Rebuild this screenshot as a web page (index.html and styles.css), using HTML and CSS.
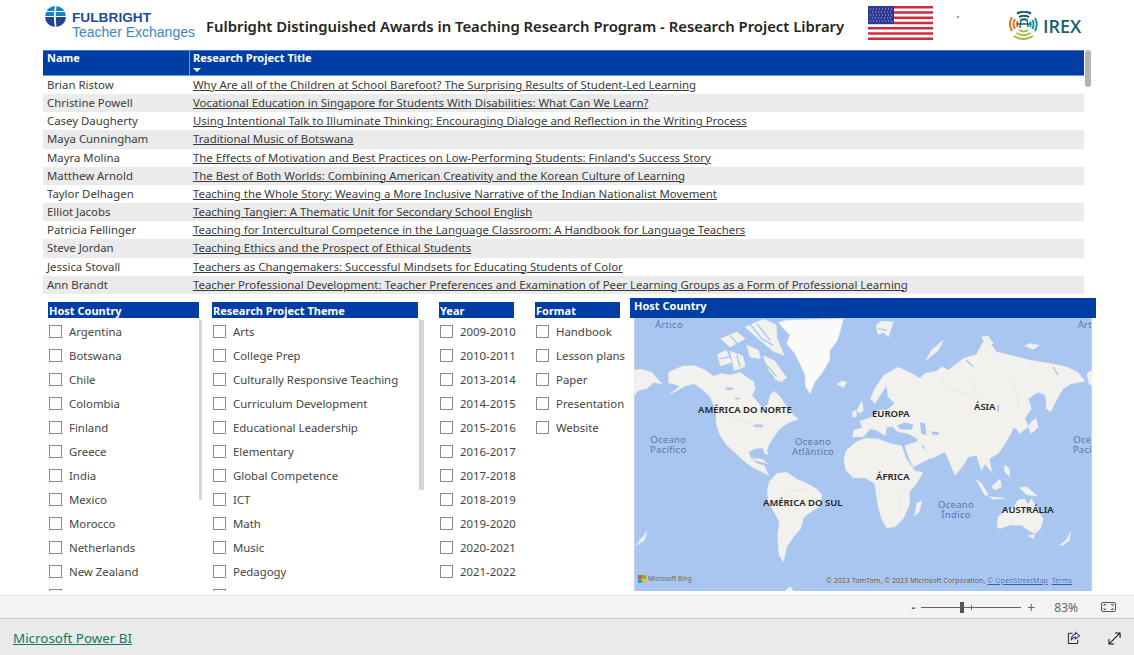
FILE: index.html
```html
<!DOCTYPE html>
<html lang="en">
<head>
  <meta charset="UTF-8">
  <meta name="viewport" content="width=device-width, initial-scale=1.0">
  <title>Research Project Library</title>
  <link rel="stylesheet" href="styles.css">
</head>
<body>

<div class="report">
  <div class="top-bar">
    <div class="fulbright">
      <svg class="globe" width="21" height="21" viewBox="0 0 21 21">
        <defs><clipPath id="globe-clip"><circle cx="10.5" cy="10.5" r="10.5"/></clipPath></defs>
        <g clip-path="url(#globe-clip)">
          <rect width="21" height="5" fill="#1482c5"/>
          <rect y="6" width="21" height="4" fill="#1482c5"/>
          <rect y="11" width="21" height="10" fill="#1f4396"/>
          <path d="M10 0C8.5 7 8.5 14 10 21H11.5C10.5 14 10.5 7 11.5 0Z" fill="#fff"/>
        </g>
      </svg>
      <div class="fulbright-text">
        <div class="fulbright-name">FULBRIGHT</div>
        <div class="fulbright-sub">Teacher Exchanges</div>
      </div>
    </div>
    <div class="report-title">Fulbright Distinguished Awards in Teaching Research Program - Research Project Library</div>
    <svg class="flag" width="65" height="34" viewBox="0 0 65 34">
      <rect width="65" height="34" fill="#fff"/>
      <path d="M0 1.3H65M0 6.5H65M0 11.8H65M0 17H65M0 22.2H65M0 27.5H65M0 32.7H65" stroke="#d2283c" stroke-width="2.6"/>
      <rect width="26" height="18" fill="#2e3a94"/>
      <path d="M2 3H24M4 6H24M2 9H24M4 12H24M2 15H24" stroke="#aab0dc" stroke-width="1" stroke-dasharray="1 2"/>
    </svg>
    <div class="speck"></div>
    <div class="irex">
      <svg width="29" height="29" viewBox="0 0 29 29" fill="none" stroke-width="2">
        <path d="M8 2.5Q15 -1 22 2.5M10 6Q15 3.5 20 6M12 9Q15 7.5 18 9" stroke="#17606a"/>
        <path d="M3 6Q-1 13 3 20M6 8Q3 13 6 18M9 10Q7 13 9 16" stroke="#e2722a"/>
        <path d="M26 7Q29.5 13 26 20M23.5 9Q25.5 13 23.5 18M21 10.5Q22.5 13 21 16" stroke="#1d97a0"/>
        <path d="M5 25Q15 31 24 25M7.5 22Q15 26.5 21.5 22M10 19Q15 22 19 19" stroke="#9cbf3c"/>
        <path d="M12 8L11 17M18 8L19 16M8 13H21" stroke="#17606a" stroke-width="1.3"/>
      </svg>
      <span class="irex-name">IREX</span>
    </div>
  </div>

  <div class="table-wrap">
    <div class="table">
      <div class="table-head">
        <div class="head-cell head-name">Name</div>
        <div class="head-cell">Research Project Title<span class="sort-arrow"></span></div>
      </div>
      <div class="row"><span class="name-col">Brian Ristow</span><a class="title-link">Why Are all of the Children at School Barefoot? The Surprising Results of Student-Led Learning</a></div>
      <div class="row"><span class="name-col">Christine Powell</span><a class="title-link">Vocational Education in Singapore for Students With Disabilities: What Can We Learn?</a></div>
      <div class="row"><span class="name-col">Casey Daugherty</span><a class="title-link">Using Intentional Talk to Illuminate Thinking: Encouraging Dialoge and Reflection in the Writing Process</a></div>
      <div class="row"><span class="name-col">Maya Cunningham</span><a class="title-link">Traditional Music of Botswana</a></div>
      <div class="row"><span class="name-col">Mayra Molina</span><a class="title-link">The Effects of Motivation and Best Practices on Low-Performing Students: Finland's Success Story</a></div>
      <div class="row"><span class="name-col">Matthew Arnold</span><a class="title-link">The Best of Both Worlds: Combining American Creativity and the Korean Culture of Learning</a></div>
      <div class="row"><span class="name-col">Taylor Delhagen</span><a class="title-link">Teaching the Whole Story: Weaving a More Inclusive Narrative of the Indian Nationalist Movement</a></div>
      <div class="row"><span class="name-col">Elliot Jacobs</span><a class="title-link">Teaching Tangier: A Thematic Unit for Secondary School English</a></div>
      <div class="row"><span class="name-col">Patricia Fellinger</span><a class="title-link">Teaching for Intercultural Competence in the Language Classroom: A Handbook for Language Teachers</a></div>
      <div class="row"><span class="name-col">Steve Jordan</span><a class="title-link">Teaching Ethics and the Prospect of Ethical Students</a></div>
      <div class="row"><span class="name-col">Jessica Stovall</span><a class="title-link">Teachers as Changemakers: Successful Mindsets for Educating Students of Color</a></div>
      <div class="row"><span class="name-col">Ann Brandt</span><a class="title-link">Teacher Professional Development: Teacher Preferences and Examination of Peer Learning Groups as a Form of Professional Learning</a></div>
    </div>
    <div class="table-scroll"></div>
  </div>

  <div class="lower">
    <div class="slicer slicer-country">
      <div class="slicer-head">Host Country</div>
      <div class="slicer-thumb"></div>
      <label class="item"><span class="box"></span>Argentina</label>
      <label class="item"><span class="box"></span>Botswana</label>
      <label class="item"><span class="box"></span>Chile</label>
      <label class="item"><span class="box"></span>Colombia</label>
      <label class="item"><span class="box"></span>Finland</label>
      <label class="item"><span class="box"></span>Greece</label>
      <label class="item"><span class="box"></span>India</label>
      <label class="item"><span class="box"></span>Mexico</label>
      <label class="item"><span class="box"></span>Morocco</label>
      <label class="item"><span class="box"></span>Netherlands</label>
      <label class="item"><span class="box"></span>New Zealand</label>
      <label class="item"><span class="box"></span></label>
    </div>
    <div class="slicer slicer-theme">
      <div class="slicer-head">Research Project Theme</div>
      <div class="slicer-thumb"></div>
      <label class="item"><span class="box"></span>Arts</label>
      <label class="item"><span class="box"></span>College Prep</label>
      <label class="item"><span class="box"></span>Culturally Responsive Teaching</label>
      <label class="item"><span class="box"></span>Curriculum Development</label>
      <label class="item"><span class="box"></span>Educational Leadership</label>
      <label class="item"><span class="box"></span>Elementary</label>
      <label class="item"><span class="box"></span>Global Competence</label>
      <label class="item"><span class="box"></span>ICT</label>
      <label class="item"><span class="box"></span>Math</label>
      <label class="item"><span class="box"></span>Music</label>
      <label class="item"><span class="box"></span>Pedagogy</label>
      <label class="item"><span class="box"></span></label>
    </div>
    <div class="slicer slicer-year">
      <div class="slicer-head">Year</div>
      <label class="item"><span class="box"></span>2009-2010</label>
      <label class="item"><span class="box"></span>2010-2011</label>
      <label class="item"><span class="box"></span>2013-2014</label>
      <label class="item"><span class="box"></span>2014-2015</label>
      <label class="item"><span class="box"></span>2015-2016</label>
      <label class="item"><span class="box"></span>2016-2017</label>
      <label class="item"><span class="box"></span>2017-2018</label>
      <label class="item"><span class="box"></span>2018-2019</label>
      <label class="item"><span class="box"></span>2019-2020</label>
      <label class="item"><span class="box"></span>2020-2021</label>
      <label class="item"><span class="box"></span>2021-2022</label>
    </div>
    <div class="slicer slicer-format">
      <div class="slicer-head">Format</div>
      <label class="item"><span class="box"></span>Handbook</label>
      <label class="item"><span class="box"></span>Lesson plans</label>
      <label class="item"><span class="box"></span>Paper</label>
      <label class="item"><span class="box"></span>Presentation</label>
      <label class="item"><span class="box"></span>Website</label>
    </div>
    <div class="map-visual">
      <div class="map-head">Host Country</div>
      <div class="map">
        <svg class="map-svg" width="458" height="273" viewBox="12 68 1374 820">
          <rect x="12" y="68" width="1374" height="820" fill="#a9c6f0"/>
          <g fill="#f2f1ed" stroke="#f2f1ed" stroke-width="2" stroke-linejoin="round">
            <!-- Greenland -->
            <path fill="#fafaf8" d="M445 82L470 75L640 70L632 100L622 135L600 165L598 195L575 235L553 262L540 295L527 275L525 240L510 205L495 175L470 145L480 120Z"/>
            <!-- North America -->
            <path d="M115 232L135 222L160 212L195 212L225 225L250 243L275 235L300 240L330 232L355 250L370 258L375 280L365 300L385 325L400 340L415 325L420 300L432 288L450 305L470 335L490 360L505 372L480 380L462 390L445 405L432 425L418 445L410 465L414 478L405 475L398 458L375 460L355 470L362 490L380 505L402 512L415 540L395 530L365 515L340 495L318 475L290 450L270 420L258 385L258 345L240 305L215 280L190 265L165 272L120 296L150 272L115 262Z"/>
            <path d="M262 178L288 165L305 200L272 212ZM300 168L338 182L345 214L312 226L306 192ZM272 130L320 110L345 130L300 155ZM400 182L432 196L470 248L445 258L415 225ZM345 95L400 72L438 88L440 128L462 180L430 168L385 130ZM350 150L385 165L390 190L360 185ZM440 225L460 260L432 250Z"/>
            <path d="M365 490L395 492L412 505L385 498Z"/>
            <!-- South America -->
            <path d="M418 560L440 535L470 532L500 552L530 565L560 582L576 600L565 635L535 655L520 668L512 700L490 725L470 755L462 790L460 800L447 780L443 730L448 680L432 650L415 620L412 585Z"/>
            <!-- Africa -->
            <path d="M642 490L650 465L680 440L705 430L745 432L790 448L815 452L828 490L855 528L878 532L860 565L838 590L838 630L820 670L795 695L770 698L755 670L745 635L738 590L735 565L705 548L670 548L648 525Z"/>
            <!-- Eurasia -->
            <path d="M668 425L672 405L698 398L690 378L722 368L745 345L770 345L795 325L775 305L770 270L750 300L735 325L722 310L735 280L762 240L805 216L845 235L870 250L885 235L920 228L935 215L955 225L1000 190L1040 178L1060 140L1085 150L1100 170L1140 180L1200 195L1260 205L1310 215L1345 232L1365 258L1325 265L1300 280L1285 305L1262 350L1250 340L1248 300L1225 290L1195 310L1205 340L1185 370L1195 395L1168 415L1160 398L1150 400L1140 420L1125 445L1105 475L1078 490L1085 530L1065 505L1055 525L1040 480L1015 485L1000 510L975 540L955 490L945 470L915 485L905 490L880 450L865 450L862 430L835 415L800 408L790 395L770 395L765 420L740 405L720 400L700 425Z"/>
            <path d="M825 452L862 440L880 460L908 485L870 505L850 515L838 490Z"/>
            <!-- Australia -->
            <path d="M1102 695L1105 665L1125 650L1150 640L1165 615L1185 612L1195 630L1205 612L1222 640L1240 672L1232 700L1215 715L1195 705L1175 690L1140 690L1110 700Z"/>
            <path d="M1195 722L1215 718L1210 730Z"/>
            <!-- Chukotka wraps around both sides -->
            <path d="M12 225L35 222L65 232L85 255L95 265L70 262L50 280L25 285L12 300Z"/>
            <path d="M1372 235L1386 225V270L1378 265Z"/>
            <!-- islands -->
            <path d="M622 267L635 258L650 262L640 276Z"/>
            <path d="M682 345L695 318L700 345L690 355ZM668 350L680 345L678 365L668 365Z"/>
            <path d="M738 90L755 78L790 80L775 125L760 110L745 118Z"/>
            <path d="M888 195L905 165L940 135L925 165L900 185Z"/>
            <path d="M1055 125L1075 122L1090 145L1070 150ZM1185 152L1200 145L1228 150L1210 162Z"/>
            <path d="M1195 395L1205 380L1218 370L1225 395L1205 415Z"/>
            <path d="M1040 555L1055 565L1075 600L1065 600ZM1085 575L1110 552L1115 575L1095 585ZM1080 605L1125 610L1090 612ZM1125 510L1138 520L1140 545L1125 530ZM1170 578L1190 575L1222 603L1190 598Z"/>
            <path d="M860 625L875 618L868 650L855 662Z"/>
            <path d="M1290 750L1310 735L1322 712L1318 735L1300 750ZM18 750L50 710L42 735Z"/>
            <path d="M465 888L480 875L490 888Z"/>
          </g>
          <g fill="#a9c6f0">
            <path d="M800 392L825 382L850 388L845 404L812 402Z"/>
            <path d="M870 382L885 384L890 420L874 415Z"/>
            <path d="M905 408L928 412L925 420L908 418Z"/>
            <ellipse cx="298" cy="280" rx="12" ry="4"/>
            <ellipse cx="322" cy="310" rx="9" ry="3"/>
            <ellipse cx="385" cy="392" rx="15" ry="5"/>
            <ellipse cx="1105" cy="340" rx="3" ry="12"/>
          </g>
          <!-- channels through the arctic islands -->
          <path d="M355 80L395 130L430 150M380 85L420 135M300 120L325 150M270 190L300 185M320 180L330 215M400 200L440 245M745 100L770 105M1010 195L1030 215M1270 215L1285 240" fill="none" stroke="#a9c6f0" stroke-width="4"/>
          <path d="M930 255C960 285 990 290 1020 300M1010 235C1015 265 1040 285 1040 310M1130 240C1150 280 1170 300 1165 345M800 590C810 610 805 630 815 650M470 585H530M300 370C340 375 370 385 400 400" fill="none" stroke="#dcdcd8" stroke-width="1.5"/>
        </svg>
        <span class="ocean ocean-arctic">Ártico</span>
        <span class="ocean ocean-arctic-2">Árt</span>
        <span class="ocean ocean-pacific">Oceano<br>Pacífico</span>
        <span class="ocean ocean-atlantic">Oceano<br>Atlântico</span>
        <span class="ocean ocean-indian">Oceano<br>Índico</span>
        <span class="ocean ocean-pacific-2">Oce<br>Pací</span>
        <span class="continent c-na">AMÉRICA DO NORTE</span>
        <span class="continent c-eu">EUROPA</span>
        <span class="continent c-as">ÁSIA</span>
        <span class="continent c-af">ÁFRICA</span>
        <span class="continent c-sa">AMÉRICA DO SUL</span>
        <span class="continent c-au">AUSTRÁLIA</span>
        <div class="bing">
          <svg width="8" height="8" viewBox="0 0 8 8"><rect width="3.8" height="3.8" fill="#f25022"/><rect x="4.2" width="3.8" height="3.8" fill="#7fba00"/><rect y="4.2" width="3.8" height="3.8" fill="#00a4ef"/><rect x="4.2" y="4.2" width="3.8" height="3.8" fill="#ffb900"/></svg>
          Microsoft Bing
        </div>
        <div class="credits">© 2023 TomTom, © 2023 Microsoft Corporation, <u class="credit-link">© OpenStreetMap</u> &nbsp;<u class="credit-link">Terms</u></div>
      </div>
    </div>
  </div>
</div>

<div class="zoom-bar">
  <span class="zoom-minus">-</span>
  <div class="zoom-track"><span class="zoom-tick"></span><span class="zoom-thumb"></span></div>
  <span class="zoom-plus">+</span>
  <span class="zoom-value">83%</span>
  <svg class="fit-icon" width="15" height="10" viewBox="0 0 15 10" fill="none" stroke="#555"><rect x="0.5" y="0.5" width="14" height="9" rx="1.5"/><path d="M3 4V2.5H5M10 2.5H12V4M12 6V7.5H10M5 7.5H3V6"/></svg>
</div>

<div class="footer">
  <a class="pbi-link">Microsoft Power BI</a>
  <div class="footer-icons">
    <svg width="14" height="14" viewBox="0 0 15 15" fill="none" stroke="#222" stroke-width="1.1"><path d="M6 2.5H2.5A1 1 0 0 0 1.5 3.5V12.5A1 1 0 0 0 2.5 13.5H10.5A1 1 0 0 0 11.5 12.5V9.5"/><path d="M9 1.5L13.5 5L9 8.5V6.5C7 6.5 5.5 7.5 4.5 10C4.5 6.5 6 4 9 3.5Z" stroke="#4a2a7a"/></svg>
    <svg width="13" height="13" viewBox="0 0 14 14" fill="none" stroke="#111" stroke-width="1.1"><path d="M1 13L13 1M7.5 1H13V6.5M1 7.5V13H6.5"/></svg>
  </div>
</div>

</body>
</html>
```

FILE: styles.css
```css
html, body {
  margin: 0;
  padding: 0;
  height: 100%;
  overflow: hidden;
  background-color: #fff;
  font-family: 'Noto Sans', 'Open Sans', sans-serif;
  color: #333;
}

body {
  display: flex;
  flex-direction: column;
  height: 655px;
}

.report {
  height: 595px;
  overflow: hidden;
  flex-shrink: 0;
}

/* top */
.top-bar {
  display: flex;
  align-items: center;
  height: 50px;
  padding-left: 45px;
}

.fulbright {
  display: flex;
  gap: 6px;
  width: 161px;
  height: 40px;
  margin-top: -3px;
}

.globe { margin-top: 2px; flex: none; }

.fulbright-name {
  font-family: 'Liberation Sans', sans-serif;
  font-size: 13.7px;
  font-weight: bold;
  line-height: 14px;
  color: #1f4a9c;
  margin-top: 7px;
}

.fulbright-sub {
  font-family: 'Liberation Sans', sans-serif;
  font-size: 14px;
  line-height: 15px;
  white-space: nowrap;
  color: #3f84c4;
}

.report-title {
  font-size: 14.85px;
  font-weight: 600;
  color: #252423;
  width: 662px;
  white-space: nowrap;
  margin-top: 2px;
}

.flag { margin-top: -4px; }

.speck {
  width: 2px;
  height: 2px;
  background-color: #777;
  border-radius: 50%;
  margin: -17px 50px 0 24px;
}

.irex {
  display: flex;
  align-items: center;
  gap: 5px;
  margin-top: 1px;
}

.irex-name {
  font-family: 'Open Sans', sans-serif;
  font-size: 18px;
  font-weight: 600;
  color: #17606a;
}

/* table */
.table-wrap {
  display: flex;
  gap: 1px;
  margin-left: 43px;
  height: 244px;
}

.table {
  width: 1041px;
  font-size: 11.4px;
  color: #3a3a3a;
}

.table-head {
  display: flex;
  height: 26px;
  background-color: #003da5;
  border-top: 1px solid #3f7bd6;
  border-bottom: 1px solid #5b9be8;
  box-sizing: border-box;
  color: #fff;
  font-size: 11px;
  font-weight: bold;
}

.head-cell {
  flex: 1;
  padding-left: 3px;
  line-height: 14px;
}

.head-name {
  flex: none;
  width: 147px;
  box-sizing: border-box;
  padding-left: 4px;
  border-right: 1px solid #5b9be8;
}

.sort-arrow {
  display: block;
  width: 0;
  height: 0;
  margin-top: 3px;
  border-left: 4.5px solid transparent;
  border-right: 4.5px solid transparent;
  border-top: 4px solid #fff;
}

.row {
  display: flex;
  height: 18.17px;
  line-height: 18px;
  white-space: nowrap;
}

.row:nth-child(odd) { background-color: #ebebeb; }

.name-col {
  width: 146px;
  padding-left: 4px;
  flex: none;
}

.title-link {
  text-decoration: underline;
  color: #3a3a3a;
}

.table-scroll {
  width: 6px;
  height: 37px;
  background-color: #b4b4b4;
  border-radius: 3px;
}

/* slicers */
.lower {
  display: flex;
  align-items: flex-start;
  margin-top: 4px;
}

.slicer {
  position: relative;
  flex: none;
  height: 289px;
  margin-top: 4px;
  overflow: hidden;
  font-size: 11.4px;
}

.slicer-country { width: 155px; margin-left: 48px; margin-right: 9px; }
.slicer-theme { width: 213px; margin-right: 14px; }
.slicer-year { width: 82px; margin-right: 14px; }
.slicer-format { width: 92px; margin-right: 3px; }

.slicer-head {
  height: 16px;
  line-height: 17px;
  background-color: #003da5;
  color: #fff;
  font-size: 11px;
  font-weight: bold;
  padding-left: 1px;
  margin-bottom: 1.5px;
  white-space: nowrap;
}

.slicer-country .slicer-head { width: 150px; }
.slicer-theme .slicer-head { width: 205px; }
.slicer-year .slicer-head { width: 74px; }
.slicer-format .slicer-head { width: 84px; }

.slicer-thumb {
  position: absolute;
  top: 18px;
  left: 151px;
  width: 3px;
  height: 180px;
  background-color: #d5d5d5;
}

.slicer-theme .slicer-thumb {
  left: 207px;
  width: 5px;
  height: 170px;
}

.item {
  display: flex;
  align-items: center;
  gap: 7px;
  height: 24px;
  color: #444;
  white-space: nowrap;
}

.box {
  width: 11px;
  height: 11px;
  margin-left: 1px;
  border: 1px solid #8a8a8a;
  flex: none;
}

/* map */
.map-visual {
  flex: none;
  width: 466px;
}

.map-head {
  height: 20px;
  line-height: 16px;
  background-color: #003da5;
  color: #fff;
  font-size: 11px;
  font-weight: bold;
  padding-left: 4px;
}

.map {
  position: relative;
  width: 458px;
  height: 273px;
  margin-left: 4px;
  overflow: hidden;
}

.map-svg {
  display: block;
  filter: blur(0.4px);
}

.ocean {
  position: absolute;
  font-size: 9.5px;
  line-height: 10px;
  letter-spacing: 0.3px;
  text-align: center;
  color: #5478b0;
  white-space: nowrap;
}

.ocean-arctic { left: 21px; top: 2px; }
.ocean-arctic-2 { right: 0; top: 2px; }
.ocean-pacific { left: 16px; top: 117px; }
.ocean-atlantic { left: 158px; top: 119px; }
.ocean-indian { left: 304px; top: 182px; }
.ocean-pacific-2 { right: 0; top: 117px; }

.continent {
  position: absolute;
  font-size: 9.5px;
  font-weight: 600;
  line-height: 12px;
  color: #222;
  white-space: nowrap;
}

.c-na { left: 64px; top: 86px; }
.c-eu { left: 238px; top: 90px; }
.c-as { left: 340px; top: 83px; }
.c-af { left: 242px; top: 153px; }
.c-sa { left: 129px; top: 179px; }
.c-au { left: 368px; top: 186px; }

.bing {
  position: absolute;
  left: 4px;
  bottom: 8px;
  display: flex;
  align-items: center;
  gap: 2px;
  font-size: 6.4px;
  color: #666;
}

.credits {
  position: absolute;
  right: 20px;
  bottom: 6px;
  font-size: 7.1px;
  color: #444;
  white-space: nowrap;
  text-shadow: 0 0 1px #fff;
}

.credit-link { color: #3a5fa8; }

/* bottom bars */
.zoom-bar {
  display: flex;
  align-items: center;
  justify-content: flex-end;
  height: 24px;
  box-sizing: border-box;
  flex-shrink: 0;
  padding-right: 18px;
  background-color: #f3f3f3;
  border-top: 1px solid #e3e3e3;
  border-bottom: 1px solid #c9c9c9;
  font-size: 12px;
  color: #666;
}

.zoom-minus { font-weight: bold; margin-right: 6px; }

.zoom-track {
  position: relative;
  width: 100px;
  height: 1px;
  background-color: #666;
}

.zoom-tick {
  position: absolute;
  left: 50px;
  top: -2px;
  width: 1px;
  height: 5px;
  background-color: #666;
}

.zoom-thumb {
  position: absolute;
  left: 39px;
  top: -5px;
  width: 4px;
  height: 11px;
  background-color: #555;
}

.zoom-plus { font-size: 14px; margin-left: 6px; }
.zoom-value { margin-left: 19px; margin-right: 23px; }

.footer {
  display: flex;
  align-items: center;
  justify-content: space-between;
  flex: 1;
  padding: 2px 13px 0 13px;
  background-color: #eaeaea;
}

.pbi-link {
  font-size: 13.4px;
  color: #117865;
  text-decoration: underline;
}

.footer-icons {
  display: flex;
  gap: 27px;
  align-items: center;
}
```
